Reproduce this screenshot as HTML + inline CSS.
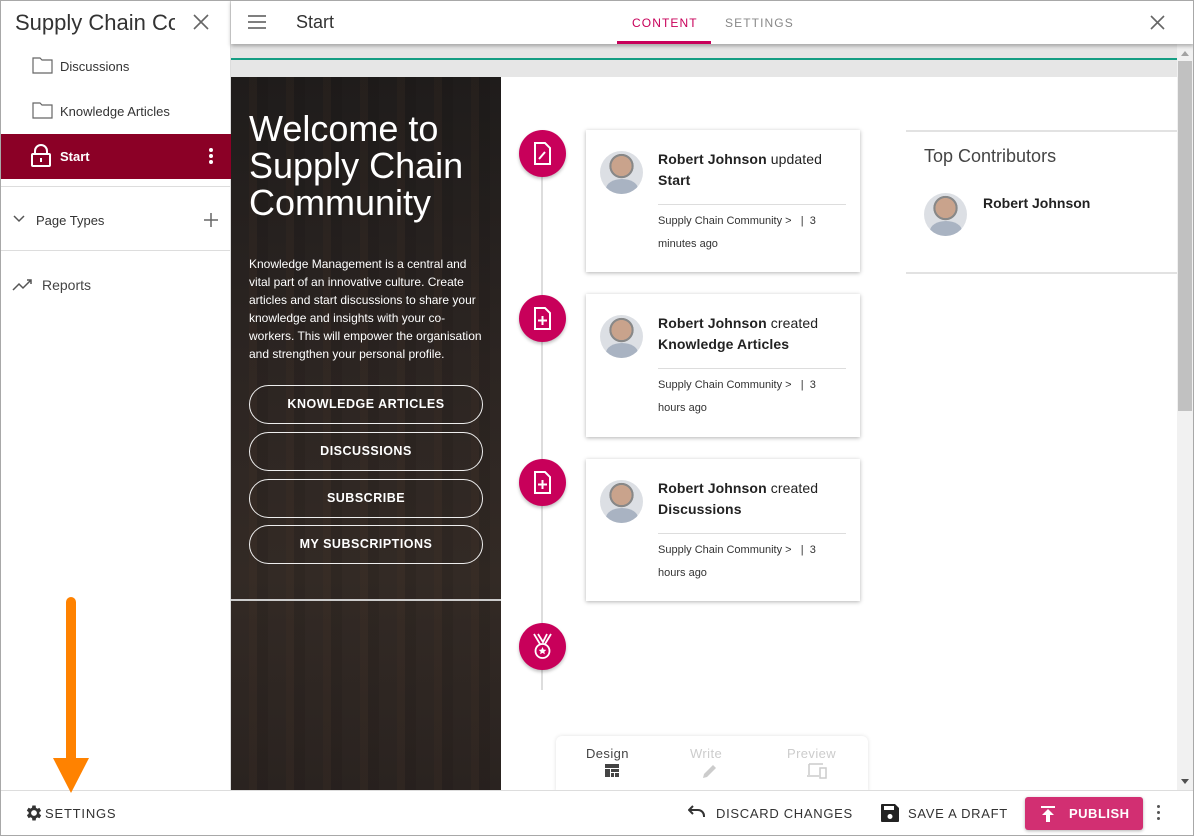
<!DOCTYPE html>
<html><head><meta charset="utf-8"><style>
*{box-sizing:border-box;margin:0;padding:0}
body{width:1194px;height:836px;overflow:hidden;font-family:"Liberation Sans",sans-serif;background:#fff;position:relative;color:#222}
.a{position:absolute}
.frame{position:absolute;inset:0;border:1px solid #a8a8a8;pointer-events:none;z-index:50}
.side{left:0;top:0;width:231px;height:790px;background:#fff;border-right:1px solid #ddd}
.nav{font-size:13px;color:#333}
.hero{left:231px;top:77px;width:270px;height:713px;background:linear-gradient(180deg,#1f1c1b 0%,#2c2522 40%,#332a25 70%,#2a2320 100%)}
.btn{position:absolute;left:18px;width:234px;height:39px;border:1.5px solid #eee;border-radius:20px;color:#fff;font-weight:bold;font-size:12.5px;letter-spacing:.5px;text-align:center;line-height:36px}
.circ{position:absolute;left:519px;width:47px;height:47px;border-radius:50%;background:#c8005a;box-shadow:0 2px 3px rgba(0,0,0,.25)}
.card{position:absolute;left:586px;width:274px;background:#fff;box-shadow:0 1px 4px rgba(0,0,0,.3)}
.av{position:absolute;left:14px;top:21px;width:43px;height:43px;border-radius:50%;background:radial-gradient(circle at 50% 35%,#c9a38c 0 28%,#888 29% 34%,#dcdfe4 35%);overflow:hidden}
.av:after{content:"";position:absolute;left:6px;top:28px;width:32px;height:20px;border-radius:50% 50% 0 0;background:#a9b3c2}
.t1{position:absolute;left:72px;top:19px;font-size:14px;line-height:21px;color:#222;letter-spacing:.1px}
.t1 b{font-weight:bold}
.hr{position:absolute;left:72px;right:14px;height:1px;background:#ddd}
.t2{position:absolute;left:72px;font-size:11px;line-height:23px;color:#333}
</style></head><body>
<div class="frame"></div>
<div class="a side">
  <div class="a" style="left:15px;top:10px;font-size:22px;color:#333;white-space:nowrap;width:160px;overflow:hidden">Supply Chain Co</div>
  <svg class="a" style="left:193px;top:14px" width="16" height="16"><path d="M1 1L15 15M15 1L1 15" stroke="#666" stroke-width="1.6"/></svg>
  <svg class="a" style="left:32px;top:56px" width="22" height="18"><path d="M1 2h7l2 2h10v13H1z" fill="none" stroke="#666" stroke-width="1.2"/></svg>
  <div class="a nav" style="left:60px;top:59px">Discussions</div>
  <svg class="a" style="left:32px;top:101px" width="22" height="18"><path d="M1 2h7l2 2h10v13H1z" fill="none" stroke="#666" stroke-width="1.2"/></svg>
  <div class="a nav" style="left:60px;top:104px">Knowledge Articles</div>
  <div class="a" style="left:1px;top:134px;width:230px;height:45px;background:#8b0026"></div>
  <svg class="a" style="left:29px;top:143px" width="24" height="24"><path d="M6 11V8a6 6 0 0 1 12 0v3" fill="none" stroke="#fff" stroke-width="2"/><rect x="3" y="11" width="18" height="12" rx="1" fill="none" stroke="#fff" stroke-width="2"/><rect x="11" y="15" width="2" height="4" fill="#fff"/></svg>
  <div class="a" style="left:60px;top:149px;color:#fff;font-size:13px;font-weight:bold">Start</div>
  <div class="a" style="left:209px;top:148px;width:4px;height:4px;border-radius:2px;background:#fff;box-shadow:0 6px 0 #fff,0 12px 0 #fff"></div>
  <div class="a" style="left:1px;top:186px;width:230px;height:1px;background:#ddd"></div>
  <svg class="a" style="left:12px;top:214px" width="14" height="10"><path d="M2 2l5 5 5-5" fill="none" stroke="#555" stroke-width="1.5"/></svg>
  <div class="a nav" style="left:36px;top:213px">Page Types</div>
  <svg class="a" style="left:204px;top:213px" width="14" height="14"><path d="M7 0v14M0 7h14" stroke="#666" stroke-width="1.5"/></svg>
  <div class="a" style="left:1px;top:250px;width:230px;height:1px;background:#ddd"></div>
  <svg class="a" style="left:12px;top:278px" width="22" height="14"><path d="M1 12l6-6 4 4 8-8M15 2h4v4" fill="none" stroke="#555" stroke-width="1.5"/></svg>
  <div class="a" style="left:42px;top:277px;font-size:14px;color:#444">Reports</div>
</div>
<div class="a" style="left:66px;top:597px;width:10px;height:170px;background:#ff8200;border-radius:5px;z-index:5"></div>
<svg class="a" style="left:53px;top:758px;z-index:5" width="36" height="36"><path d="M0 0H36L18 35z" fill="#ff8200"/></svg>
<div class="a" style="left:231px;top:0;width:963px;height:44px;background:#fff;box-shadow:0 2px 4px rgba(0,0,0,.3);z-index:3">
  <svg class="a" style="left:17px;top:15px" width="18" height="14"><path d="M0 1h18M0 7h18M0 13h18" stroke="#555" stroke-width="1.6"/></svg>
  <div class="a" style="left:65px;top:12px;font-size:18px;color:#333">Start</div>
  <div class="a" style="left:401px;top:16px;font-size:12px;letter-spacing:1.1px;color:#c8005a">CONTENT</div>
  <div class="a" style="left:386px;top:41px;width:94px;height:3px;background:#c8005a"></div>
  <div class="a" style="left:494px;top:16px;font-size:12px;letter-spacing:1.1px;color:#888">SETTINGS</div>
  <svg class="a" style="left:919px;top:15px" width="15" height="15"><path d="M1 1L14 14M14 1L1 14" stroke="#666" stroke-width="1.6"/></svg>
</div>
<div class="a" style="left:231px;top:44px;width:946px;height:33px;background:#e6e6e6"></div>
<div class="a" style="left:231px;top:58px;width:946px;height:2px;background:#169e84"></div>
<div class="a" style="left:1177px;top:44px;width:17px;height:746px;background:#f1f1f1"></div>
<div class="a" style="left:1178px;top:61px;width:14px;height:350px;background:#c1c1c1"></div>
<svg class="a" style="left:1181px;top:51px" width="9" height="6"><path d="M0 5h8L4 0z" fill="#a3a3a3"/></svg>
<svg class="a" style="left:1181px;top:779px" width="9" height="6"><path d="M0 0h8L4 5z" fill="#505050"/></svg>
<div class="a hero">
  <div class="a" style="left:0;top:0;width:270px;height:713px;background:repeating-linear-gradient(90deg,rgba(0,0,0,0) 0 18px,rgba(90,60,40,.10) 18px 26px,rgba(0,0,0,.08) 26px 37px);"></div>
  <div class="a" style="left:18px;top:33px;color:#fff;font-size:36px;line-height:37px;width:250px">Welcome to Supply Chain Community</div>
  <div class="a" style="left:18px;top:178px;color:#fff;font-size:12px;line-height:18px;width:235px">Knowledge Management is a central and vital part of an innovative culture. Create articles and start discussions to share your knowledge and insights with your co-workers. This will empower the organisation and strengthen your personal profile.</div>
  <div class="btn" style="top:308px">KNOWLEDGE ARTICLES</div>
  <div class="btn" style="top:355px">DISCUSSIONS</div>
  <div class="btn" style="top:402px">SUBSCRIBE</div>
  <div class="btn" style="top:448px">MY SUBSCRIPTIONS</div>
  <div class="a" style="left:0;top:522px;width:270px;height:2px;background:#ccc"></div>
</div>
<div class="a" style="left:541px;top:150px;width:2px;height:540px;background:#ddd"></div>
<div class="circ" style="top:130px"><svg class="a" style="left:14px;top:12px" width="19" height="23"><path d="M2 1h10l5 5v16H2z" fill="none" stroke="#fff" stroke-width="2"/><path d="M6 17l6-7" stroke="#fff" stroke-width="2"/></svg></div>
<div class="circ" style="top:295px"><svg class="a" style="left:14px;top:12px" width="19" height="23"><path d="M2 1h10l5 5v16H2z" fill="none" stroke="#fff" stroke-width="2"/><path d="M9.5 9v9M5 13.5h9" stroke="#fff" stroke-width="2"/></svg></div>
<div class="circ" style="top:459px"><svg class="a" style="left:14px;top:12px" width="19" height="23"><path d="M2 1h10l5 5v16H2z" fill="none" stroke="#fff" stroke-width="2"/><path d="M9.5 9v9M5 13.5h9" stroke="#fff" stroke-width="2"/></svg></div>
<div class="circ" style="top:623px"><svg class="a" style="left:12px;top:10px" width="23" height="27"><path d="M3 1l6 10M20 1l-6 10M7 1l5 8 4-8" fill="none" stroke="#fff" stroke-width="1.8"/><circle cx="11.5" cy="18" r="7" fill="none" stroke="#fff" stroke-width="1.8"/><path d="M11.5 14l1.2 2.6 2.6.3-2 1.8.6 2.6-2.4-1.4-2.4 1.4.6-2.6-2-1.8 2.6-.3z" fill="#fff"/></svg></div>
<div class="card" style="top:130px;height:142px"><div class="av"></div><div class="t1"><b>Robert Johnson</b> updated<br><b>Start</b></div><div class="hr" style="top:74px"></div><div class="t2" style="top:80px">Supply Chain Community &gt; &nbsp;&nbsp;| &nbsp;3<br>minutes ago</div></div>
<div class="card" style="top:294px;height:143px"><div class="av"></div><div class="t1"><b>Robert Johnson</b> created<br><b>Knowledge Articles</b></div><div class="hr" style="top:74px"></div><div class="t2" style="top:80px">Supply Chain Community &gt; &nbsp;&nbsp;| &nbsp;3<br>hours ago</div></div>
<div class="card" style="top:459px;height:142px"><div class="av"></div><div class="t1"><b>Robert Johnson</b> created<br><b>Discussions</b></div><div class="hr" style="top:74px"></div><div class="t2" style="top:80px">Supply Chain Community &gt; &nbsp;&nbsp;| &nbsp;3<br>hours ago</div></div>
<div class="a" style="left:906px;top:130px;width:271px;height:2px;background:#e2e2e2"></div>
<div class="a" style="left:924px;top:146px;font-size:18px;color:#444">Top Contributors</div>
<div class="av" style="left:924px;top:193px"></div>
<div class="a" style="left:983px;top:195px;font-size:14px;font-weight:bold;color:#222">Robert Johnson</div>
<div class="a" style="left:906px;top:272px;width:271px;height:2px;background:#e2e2e2"></div>
<div class="a" style="left:556px;top:736px;width:312px;height:60px;background:#fff;border-radius:6px;box-shadow:0 0 4px rgba(0,0,0,.12)">
  <div class="a" style="left:30px;top:10px;font-size:13px;color:#444;letter-spacing:.4px">Design</div>
  <svg class="a" style="left:49px;top:28px" width="14" height="13"><path d="M0 0h14v4H0zM0 5h5v8H0zM6 5h8v3H6zM6 9h3v4H6zM10 9h4v4h-4z" fill="#444"/></svg>
  <div class="a" style="left:134px;top:10px;font-size:13px;color:#ccc;letter-spacing:.4px">Write</div>
  <svg class="a" style="left:145px;top:26px" width="18" height="18"><path d="M2 16l1-4 9-9 3 3-9 9z" fill="#ccc"/></svg>
  <div class="a" style="left:231px;top:10px;font-size:13px;color:#ccc;letter-spacing:.4px">Preview</div>
  <svg class="a" style="left:251px;top:27px" width="20" height="16"><path d="M2 1h14M2 1v11M0 13h12" fill="none" stroke="#ccc" stroke-width="1.5"/><rect x="13" y="5" width="6" height="10" fill="none" stroke="#ccc" stroke-width="1.5"/></svg>
</div>
<div class="a" style="left:0;top:790px;width:1194px;height:46px;background:#fff;border-top:1px solid #ddd;z-index:4">
  <svg class="a" style="left:24px;top:12px" width="20" height="20" viewBox="0 0 24 24"><path fill="#333" d="M19.4 13a7.5 7.5 0 0 0 0-2l2.1-1.6-2-3.5-2.5 1a7 7 0 0 0-1.7-1L15 3h-4l-.4 2.7a7 7 0 0 0-1.7 1l-2.5-1-2 3.5L6.6 11a7.5 7.5 0 0 0 0 2l-2.100 1.6 2 3.5 2.5-1a7 7 0 0 0 1.7 1L11 21h4l.4-2.7a7 7 0 0 0 1.7-1l2.5 1 2-3.5zM13 15.5a3.5 3.5 0 1 1 0-7 3.5 3.5 0 0 1 0 7z" transform="translate(-1 0)"/></svg>
  <div class="a" style="left:45px;top:15px;font-size:13px;letter-spacing:.8px;color:#333">SETTINGS</div>
  <svg class="a" style="left:688px;top:14px" width="18" height="14"><path d="M5 1L1 5l4 4" fill="none" stroke="#333" stroke-width="2"/><path d="M2 5h8a6 6 0 0 1 6 6v1" fill="none" stroke="#333" stroke-width="2"/></svg>
  <div class="a" style="left:716px;top:15px;font-size:13px;letter-spacing:.7px;color:#333">DISCARD CHANGES</div>
  <svg class="a" style="left:881px;top:13px" width="18" height="18"><path d="M0 1a1 1 0 0 1 1-1h13l4 4v13a1 1 0 0 1-1 1H1a1 1 0 0 1-1-1z" fill="#222"/><rect x="3" y="2" width="10" height="4" fill="#fff"/><circle cx="9" cy="12.5" r="2.5" fill="#fff"/></svg>
  <div class="a" style="left:908px;top:15px;font-size:13px;letter-spacing:.7px;color:#333">SAVE A DRAFT</div>
  <div class="a" style="left:1025px;top:6px;width:118px;height:33px;background:#d22f72;border-radius:3px;box-shadow:0 1px 3px rgba(0,0,0,.3)">
    <svg class="a" style="left:15px;top:9px" width="16" height="16"><path d="M1 1h14" stroke="#fff" stroke-width="2"/><path d="M8 3L2 9h4v7h4V9h4z" fill="#fff"/></svg>
    <div class="a" style="left:44px;top:9px;font-size:13px;font-weight:bold;letter-spacing:.5px;color:#fff">PUBLISH</div>
  </div>
  <div class="a" style="left:1157px;top:14px;width:3px;height:3px;border-radius:2px;background:#555;box-shadow:0 6px 0 #555,0 12px 0 #555"></div>
</div>
</body></html>
